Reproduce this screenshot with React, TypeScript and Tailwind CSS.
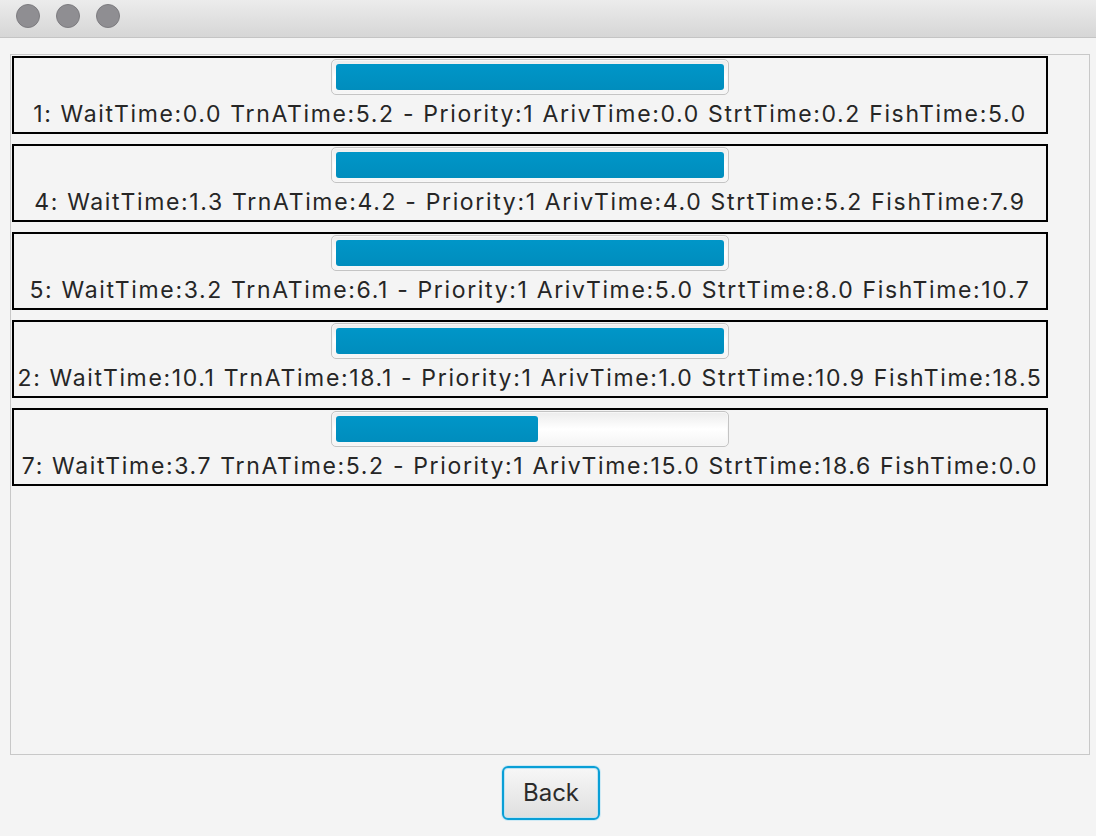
import React from "react";

type Job = {
  label: string;
  progress: number;
};

const jobs: Job[] = [
  {
    label:
      "1: WaitTime:0.0 TrnATime:5.2 - Priority:1 ArivTime:0.0 StrtTime:0.2 FishTime:5.0",
    progress: 1,
  },
  {
    label:
      "4: WaitTime:1.3 TrnATime:4.2 - Priority:1 ArivTime:4.0 StrtTime:5.2 FishTime:7.9",
    progress: 1,
  },
  {
    label:
      "5: WaitTime:3.2 TrnATime:6.1 - Priority:1 ArivTime:5.0 StrtTime:8.0 FishTime:10.7",
    progress: 1,
  },
  {
    label:
      "2: WaitTime:10.1 TrnATime:18.1 - Priority:1 ArivTime:1.0 StrtTime:10.9 FishTime:18.5",
    progress: 1,
  },
  {
    label:
      "7: WaitTime:3.7 TrnATime:5.2 - Priority:1 ArivTime:15.0 StrtTime:18.6 FishTime:0.0",
    progress: 0.52,
  },
];

function ProgressBar({ value }: { value: number }) {
  return (
    <div className="mt-[1px] h-[36px] w-[398px] rounded-[5px] border border-[#c4c4c4] bg-gradient-to-b from-[#ececec] via-[#ffffff] to-[#f4f4f4] p-[4px] shadow-[inset_0_0_0_1px_#f7f7f7]">
      <div
        className="h-full rounded-[3px] bg-gradient-to-b from-[#0096c8] to-[#008dbd]"
        style={{ width: `${value * 100}%` }}
      />
    </div>
  );
}

function JobRow({ job }: { job: Job }) {
  return (
    <div className="flex h-[78px] w-[1036px] flex-col items-center border-2 border-black">
      <ProgressBar value={job.progress} />
      <div className="flex flex-1 items-center whitespace-nowrap pt-[1px] text-[23px] tracking-[1.65px] text-[#262626]">
        {job.label}
      </div>
    </div>
  );
}

export default function App() {
  return (
    <div
      className="flex h-[836px] w-[1096px] flex-col bg-[#f4f4f4]"
      style={{ fontFamily: 'Inter, "Liberation Sans", Arial, sans-serif' }}
    >
      {/* title bar */}
      <div className="flex h-[38px] items-start gap-[16px] border-b border-[#c4c4c4] bg-gradient-to-b from-[#ececec] to-[#d6d6d6] pl-[16px] pt-[4px]">
        <div className="h-[24px] w-[24px] rounded-full border border-[#7d7c80] bg-[#8f8e92]" />
        <div className="h-[24px] w-[24px] rounded-full border border-[#7d7c80] bg-[#8f8e92]" />
        <div className="h-[24px] w-[24px] rounded-full border border-[#7d7c80] bg-[#8f8e92]" />
      </div>

      <div className="ml-[10px] mt-[16px] flex h-[701px] w-[1080px] flex-col gap-[10px] border border-[#c8c8c8] p-[1px]">
        {jobs.map((job) => (
          <JobRow key={job.label} job={job} />
        ))}
      </div>

      <div className="flex justify-center pl-[6px] pt-[11px]">
        <button className="h-[54px] w-[98px] rounded-[6px] border-2 border-[#0a9fd6] bg-gradient-to-b from-[#f7f7f7] to-[#dfdfdf] text-[24px] text-[#2b2b2b] shadow-[0_0_0_1px_#cfeaf5,inset_0_0_0_1px_#bfe3f2]">
          Back
        </button>
      </div>
    </div>
  );
}
